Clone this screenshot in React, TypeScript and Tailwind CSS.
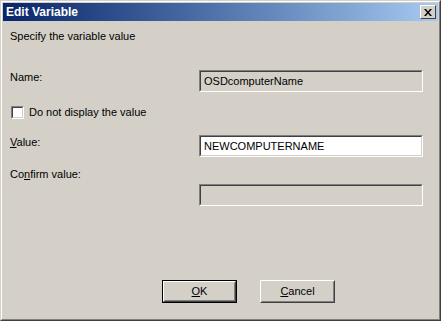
import React from "react";

const font = { fontFamily: '"Liberation Sans", Arial, sans-serif' };

function Sunken({ value, white }: { value?: string; white?: boolean }) {
  return (
    <div className="w-[224px] h-[22px] border border-t-[#808080] border-l-[#808080] border-r-white border-b-white">
      <div
        className={`w-full h-full border border-t-[#404040] border-l-[#404040] border-r-[#d4d0c8] border-b-[#d4d0c8] pl-[3px] text-[11px] leading-[18px] text-black ${white ? "bg-white" : "bg-[#d4d0c8]"}`}
      >
        {value}
      </div>
    </div>
  );
}

function Button({ children, isDefault }: { children: React.ReactNode; isDefault?: boolean }) {
  const inner = (
    <div className="w-full h-full border border-t-white border-l-white border-r-[#404040] border-b-[#404040]">
      <div className="w-full h-full border border-t-[#d4d0c8] border-l-[#d4d0c8] border-r-[#808080] border-b-[#808080] flex items-center justify-center text-[11px] text-black">
        {children}
      </div>
    </div>
  );
  return (
    <div className={`w-[75px] h-[23px] ${isDefault ? "border border-black" : ""}`}>{inner}</div>
  );
}

export default function App() {
  return (
    <div className="w-[441px] h-[321px] bg-[#d4d0c8]" style={font}>
      <div className="w-full h-full border border-t-[#d4d0c8] border-l-[#d4d0c8] border-r-[#404040] border-b-[#404040]">
        <div className="w-full h-full border border-t-white border-l-white border-r-[#808080] border-b-[#808080] p-px flex flex-col">
          {/* title bar */}
          <div className="h-[18px] flex items-center justify-between bg-gradient-to-r from-[#0a246a] to-[#a6caf0] pl-[3px] pr-[2px]">
            <span className="text-white font-bold text-[12px]">Edit Variable</span>
            <div className="w-[16px] h-[14px] border border-t-white border-l-white border-r-[#404040] border-b-[#404040] bg-[#d4d0c8] flex items-center justify-center">
              <svg width="8" height="7" viewBox="0 0 8 7">
                <path d="M0 0h2l2 2.5L6 0h2L5 3.5 8 7H6L4 4.5 2 7H0l3-3.5z" fill="black" />
              </svg>
            </div>
          </div>

          {/* client */}
          <div className="flex-1 flex flex-col pl-[7px] text-[11px] leading-[13px] text-black">
            <div className="mt-[9px] h-[13px]">Specify the variable value</div>

            <div className="mt-[27px] flex items-start">
              <div className="w-[189px] pt-px">Name:</div>
              <Sunken value="OSDcomputerName" />
            </div>

            <div className="mt-[14px] flex items-center h-[13px]">
              <div className="ml-px w-[13px] h-[13px] border border-t-[#808080] border-l-[#808080] border-r-white border-b-white">
                <div className="w-full h-full bg-white border border-t-[#404040] border-l-[#404040] border-r-[#d4d0c8] border-b-[#d4d0c8]" />
              </div>
              <span className="ml-[5px]">Do not display the value</span>
            </div>

            <div className="mt-[16px] flex items-start">
              <div className="w-[189px] pt-px">
                <span className="underline">V</span>alue:
              </div>
              <Sunken value="NEWCOMPUTERNAME" white />
            </div>

            <div className="mt-[11px] h-[13px]">
              Co<span className="underline">n</span>firm value:
            </div>

            <div className="mt-[3px] flex">
              <div className="w-[189px]" />
              <Sunken />
            </div>

            <div className="mt-[74px] flex ml-[152px] gap-[23px]">
              <Button isDefault>
                <span className="underline">O</span>K
              </Button>
              <Button>
                <span className="underline">C</span>ancel
              </Button>
            </div>
          </div>
        </div>
      </div>
    </div>
  );
}
